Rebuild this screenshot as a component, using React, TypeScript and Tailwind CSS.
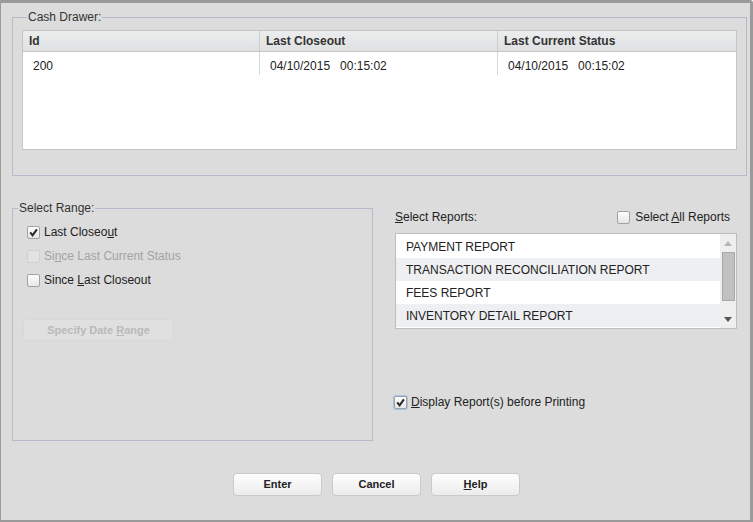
import React from 'react';
import clsx from 'clsx';

const rows = [{ id: '200', closeout: '04/10/2015   00:15:02', status: '04/10/2015   00:15:02' }];

const reports = [
  'PAYMENT REPORT',
  'TRANSACTION RECONCILIATION REPORT',
  'FEES REPORT',
  'INVENTORY DETAIL REPORT',
];

const Check: React.FC<{ checked?: boolean; disabled?: boolean; focused?: boolean }> = ({ checked, disabled, focused }) => (
  <span
    className={clsx(
      'flex h-[13px] w-[13px] shrink-0 items-center justify-center rounded-[2px] border',
      disabled
        ? 'border-[#d0d0d0] bg-[#e2e2e2]'
        : 'border-[#a2a2a2] bg-gradient-to-b from-[#fdfdfd] to-[#e6e6e6]',
      focused && 'border-[#6f98d0] ring-1 ring-[#a8c0e4]'
    )}
  >
    {checked && (
      <svg width="9" height="9" viewBox="0 0 9 9">
        <path d="M1.2 4.4 L3.6 7.3 L7.9 1.3" fill="none" stroke="#2b2b2b" strokeWidth="2.1" />
      </svg>
    )}
  </span>
);

const Legend: React.FC<{ children: React.ReactNode }> = ({ children }) => (
  <legend className="ml-[5px] px-[1px] text-[12px] leading-[14px] text-[#333]">{children}</legend>
);

const DialogButton: React.FC<{ children: React.ReactNode }> = ({ children }) => (
  <button className="h-[23px] w-[89px] rounded-[4px] border border-[#cacaca] bg-gradient-to-b from-[#fefefe] to-[#ececec] text-[11px] font-bold text-[#222]">
    {children}
  </button>
);

export default function App() {
  return (
    <div className="h-[522px] w-[753px] overflow-hidden rounded-tr-[3px] border-t-[3px] border-r-[3px] border-b-2 border-l border-[#9a9a9a] bg-[#dcdcdc] font-['Liberation_Sans',Arial,sans-serif] text-[12px] text-[#222]">
      {/* Cash drawer */}
      <fieldset className="mt-[7px] ml-[11px] w-[735px] border border-[#b6bacb] px-[9px] pb-[25px]">
        <Legend>Cash Drawer:</Legend>
        <div className="mt-[6px] h-[120px] border border-[#c4c4c4] bg-white">
          <div className="grid h-[21px] grid-cols-[237px_238px_1fr] border-b border-[#c6c6c6] bg-gradient-to-b from-[#eceded] to-[#dfe0e2] text-[12px] font-bold text-[#333]">
            <div className="flex items-center border-r border-[#cdcdcd] pl-[6px]">Id</div>
            <div className="flex items-center border-r border-[#cdcdcd] pl-[6px]">Last Closeout</div>
            <div className="flex items-center pl-[6px]">Last Current Status</div>
          </div>
          {rows.map((r) => (
            <div key={r.id} className="grid h-[23px] grid-cols-[237px_238px_1fr] whitespace-pre text-[12px] text-[#222]">
              <div className="flex items-center border-r border-[#d6d6d6] pt-[4px] pl-[10px]">{r.id}</div>
              <div className="flex items-center border-r border-[#d6d6d6] pt-[4px] pl-[10px]">{r.closeout}</div>
              <div className="flex items-center pt-[4px] pl-[10px]">{r.status}</div>
            </div>
          ))}
        </div>
      </fieldset>

      <div className="mt-[25px] ml-[11px] flex">
        {/* Select range */}
        <fieldset className="h-[240px] w-[361px] border border-[#b6bacb]">
          <Legend>Select Range:</Legend>
          <div className="flex flex-col pt-[5px] pl-[14px]">
            <label className="flex h-[24px] items-center gap-[4px]">
              <Check checked />
              <span>Last Closeo<u>u</u>t</span>
            </label>
            <label className="flex h-[24px] items-center gap-[4px] text-[#a3a3a3]">
              <Check disabled />
              <span>Si<u>n</u>ce Last Current Status</span>
            </label>
            <label className="flex h-[24px] items-center gap-[4px]">
              <Check />
              <span>Since <u>L</u>ast Closeout</span>
            </label>
          </div>
          <button className="mt-[27px] ml-[10px] h-[22px] w-[151px] rounded-[3px] border border-[#d8d8d8] bg-[#e0e0e0] text-[11px] font-bold text-[#b9b9b9]">
            Specify Date <u>R</u>ange
          </button>
        </fieldset>

        {/* Reports */}
        <div className="ml-[22px] w-[342px]">
          <div className="mt-[8px] flex h-[16px] items-center justify-between">
            <span><u>S</u>elect Reports:</span>
            <label className="mr-[7px] flex items-center gap-[5px]">
              <Check />
              <span>Select <u>A</u>ll Reports</span>
            </label>
          </div>
          <div className="mt-[8px] flex h-[96px] border border-[#bdbdbd] bg-white">
            <ul className="flex-1 overflow-hidden pt-[1px]">
              {reports.map((r, i) => (
                <li
                  key={r}
                  className={clsx('flex h-[23px] items-center pl-[10px] text-[12px] text-[#222]', i % 2 === 1 && 'bg-[#eeeff1]')}
                >
                  {r}
                </li>
              ))}
            </ul>
            <div className="flex w-[16px] flex-col items-center bg-[#efefef]">
              <svg className="mt-[7px]" width="8" height="5" viewBox="0 0 8 5">
                <path d="M0 5 L4 0 L8 5 Z" fill="#b5b5b5" />
              </svg>
              <div className="mt-[6px] h-[49px] w-[13px] border border-[#a9a9a9] bg-[#c1c1c1]" />
              <svg className="mt-auto mb-[6px]" width="8" height="5" viewBox="0 0 8 5">
                <path d="M0 0 L8 0 L4 5 Z" fill="#555" />
              </svg>
            </div>
          </div>
          <label className="mt-[65px] -ml-[1px] flex h-[16px] items-center gap-[4px]">
            <Check checked focused />
            <span><u>D</u>isplay Report(s) before Printing</span>
          </label>
        </div>
      </div>

      <div className="mt-[32px] flex justify-center gap-[10px] pl-[2px]">
        <DialogButton>Enter</DialogButton>
        <DialogButton>Cancel</DialogButton>
        <DialogButton><u>H</u>elp</DialogButton>
      </div>
    </div>
  );
}
